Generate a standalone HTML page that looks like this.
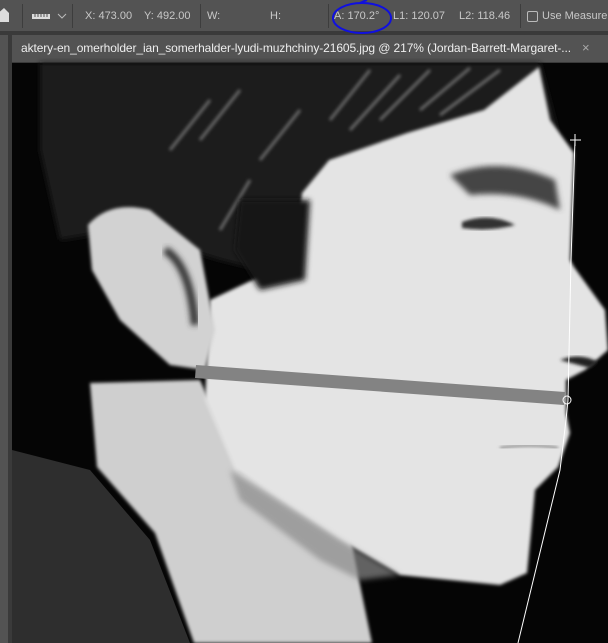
<!DOCTYPE html>
<html><head><meta charset="utf-8"><style>
html,body{margin:0;padding:0;background:#3a3a3a;width:608px;height:643px;overflow:hidden;font-family:"Liberation Sans",sans-serif;}
.tb{position:absolute;left:0;top:0;width:608px;height:31px;background:#535353;color:#c8c8c8;font-size:11px;}
.tb span{position:absolute;top:10px;white-space:nowrap}
.sep{position:absolute;top:4px;width:1px;height:24px;background:#3d3d3d}
.tab{position:absolute;left:12px;top:35px;width:596px;height:27px;background:#535353;color:#eee;font-size:12px;}
.left{position:absolute;left:0;top:35px;width:8px;height:608px;background:#535353}
</style></head><body>
<div class="tb">
<svg style="position:absolute;left:0;top:8px" width="9" height="14"><path d="M-4 7 L4 0 L9 5 V14 H-4Z" fill="#ddd"/></svg>
<div class="sep" style="left:22px"></div>
<svg style="position:absolute;left:32px;top:12px" width="20" height="8"><rect x="0" y="2" width="18" height="5" fill="#ddd"/><path d="M3 2v3M6 2v3M9 2v3M12 2v3M15 2v3" stroke="#535353"/></svg>
<svg style="position:absolute;left:57px;top:13px" width="10" height="7"><path d="M1 1l4 4 4-4" stroke="#bbb" fill="none"/></svg>
<div class="sep" style="left:72px"></div>
<span style="left:85px">X: 473.00</span><span style="left:144px">Y: 492.00</span>
<div class="sep" style="left:200px"></div>
<span style="left:207px">W:</span><span style="left:270px">H:</span>
<div class="sep" style="left:328px"></div>
<span style="left:334px">A: 170.2°</span><span style="left:393px">L1: 120.07</span><span style="left:459px">L2: 118.46</span>
<div class="sep" style="left:520px"></div>
<div style="position:absolute;left:527px;top:11px;width:9px;height:9px;border:1px solid #bbb;border-radius:2px"></div>
<span style="left:542px">Use Measurem</span>
</div>
<div class="left"></div>
<div class="tab"><span style="position:absolute;left:9px;top:6px;white-space:nowrap;letter-spacing:-0.1px">aktery-en_omerholder_ian_somerhalder-lyudi-muzhchiny-21605.jpg @ 217% (Jordan-Barrett-Margaret-...</span><span style="position:absolute;left:570px;top:5px;color:#aaa;font-size:13px">×</span></div>
<svg style="position:absolute;left:0;top:0" width="608" height="643">
<defs><filter id="b"><feGaussianBlur stdDeviation="3"/></filter><filter id="b2"><feGaussianBlur stdDeviation="1.5"/></filter></defs>
<rect x="12" y="63" width="596" height="580" fill="#050505"/>
<path d="M40 63 H540 L560 140 L480 120 L330 160 L300 200 L300 280 L220 260 L120 230 L60 240 L40 150Z" fill="#1e1e1e" filter="url(#b)"/>
<g stroke="#6a6a6a" stroke-width="3" filter="url(#b2)" fill="none">
<path d="M330 120 L370 70"/><path d="M350 130 L400 75"/><path d="M380 120 L430 70"/><path d="M420 110 L470 68"/><path d="M440 115 L500 70"/><path d="M200 140 L240 90"/><path d="M170 150 L210 100"/><path d="M260 160 L300 110"/><path d="M220 230 L250 180"/>
</g>
<path d="M12 450 L90 470 L150 540 L190 643 L12 643Z" fill="#2e2e2e"/>
<path d="M90 383 L200 380 L240 470 L350 535 L360 585 L372 643 L194 643 L155 533 L97 467Z" fill="#cfcfcf" filter="url(#b2)"/>
<path d="M295 260 L302 193 L329 160 L407 133 L484 110 L539 67 L550 120 L574 153 L570 260 L574 267 L605 310 L608 350 L585 370 L566 380 L566 413 L570 433 L558 467 L535 490 L531 533 L527 573 L500 585 L400 575 L340 540 L235 470 L205 400 L210 300Z" fill="#e4e4e4" filter="url(#b2)"/>
<path d="M230 470 L340 540 L400 575 L360 580 L320 560 L240 500Z" fill="#8a8a8a" filter="url(#b)" opacity=".7"/>
<path d="M240 200 L310 200 L305 280 L260 290 L235 250Z" fill="#151515" filter="url(#b)"/>
<path d="M88 225 Q110 200 150 210 L200 250 L215 330 L205 370 L170 365 L120 320 L92 270Z" fill="#d2d2d2" filter="url(#b2)"/>
<path d="M165 250 Q190 265 195 325" stroke="#333" stroke-width="8" fill="none" filter="url(#b)"/>
<path d="M450 175 Q500 155 555 180 L560 210 Q520 190 470 195Z" fill="#444" filter="url(#b)"/>
<path d="M462 222 Q490 212 515 225 Q490 232 462 228Z" fill="#333" filter="url(#b2)"/>
<path d="M560 360 Q580 352 598 362 L590 368 Z" fill="#222" filter="url(#b2)"/>
<path d="M500 448 Q530 443 558 448" stroke="#777" stroke-width="2" fill="none" filter="url(#b2)"/>
<path d="M196 365 L565 392 L564 405 L195 378Z" fill="#838383"/>
<path d="M575 140 L571 260 L568 400 L566 420 L560 470 L518 643" stroke="#fff" stroke-width="1" fill="none"/>
<path d="M570 140 H581 M575 134 V146" stroke="#fff"/>
<circle cx="567" cy="400" r="4" fill="none" stroke="#fff"/>
<ellipse cx="362" cy="18" rx="29" ry="15" fill="none" stroke="#1010e0" stroke-width="2"/>
<path d="M360 3 Q364 1 367 0" stroke="#1010e0" stroke-width="2" fill="none"/>
</svg>
</body></html>
